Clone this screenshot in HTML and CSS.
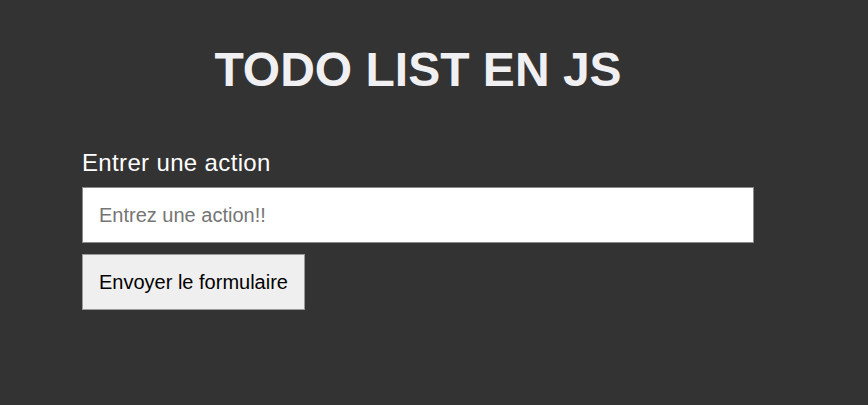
FILE: index.html
```html
<!DOCTYPE html>
<html lang="fr">
<head>
<meta charset="utf-8">
<title>Todo list</title>
<link rel="stylesheet" href="styles.css">
</head>
<body>
<main class="app">
  <h1 class="title">TODO LIST EN JS</h1>
  <form class="form">
    <label class="label" for="action">Entrer une action</label>
    <input class="input" id="action" type="text" placeholder="Entrez une action!!">
    <button class="button" type="button">Envoyer le formulaire</button>
  </form>
</main>
</body>
</html>
```
FILE: styles.css
```css
html, body {
  margin: 0;
  padding: 0;
  background: #333333;
  height: 100%;
}
body {
  font-family: "Liberation Sans", Arial, sans-serif;
}
.app {
  width: 672px;
  padding: 42px 0 0 82px;
}
.title {
  margin: 0;
  font-size: 48px;
  line-height: 56px;
  font-weight: bold;
  color: #f0f0f2;
  text-align: center;
}
.form {
  display: flex;
  flex-direction: column;
  align-items: flex-start;
  margin-top: 51px;
}
.label {
  font-size: 24px;
  line-height: 28px;
  letter-spacing: 0.35px;
  color: #ffffff;
}
.input {
  box-sizing: border-box;
  width: 672px;
  height: 56px;
  margin-top: 10px;
  padding: 0 16px;
  border: 1px solid #8a8a8a;
  background: #ffffff;
  font-family: "Liberation Sans", Arial, sans-serif;
  font-size: 20px;
  color: #222;
  outline: none;
}
.input::placeholder {
  color: #757575;
}
.button {
  box-sizing: border-box;
  height: 56px;
  margin-top: 11px;
  padding: 0 16px;
  border: 1px solid #9a9a9a;
  border-radius: 0;
  background: #efefef;
  font-family: "Liberation Sans", Arial, sans-serif;
  font-size: 20px;
  color: #000;
}
```
